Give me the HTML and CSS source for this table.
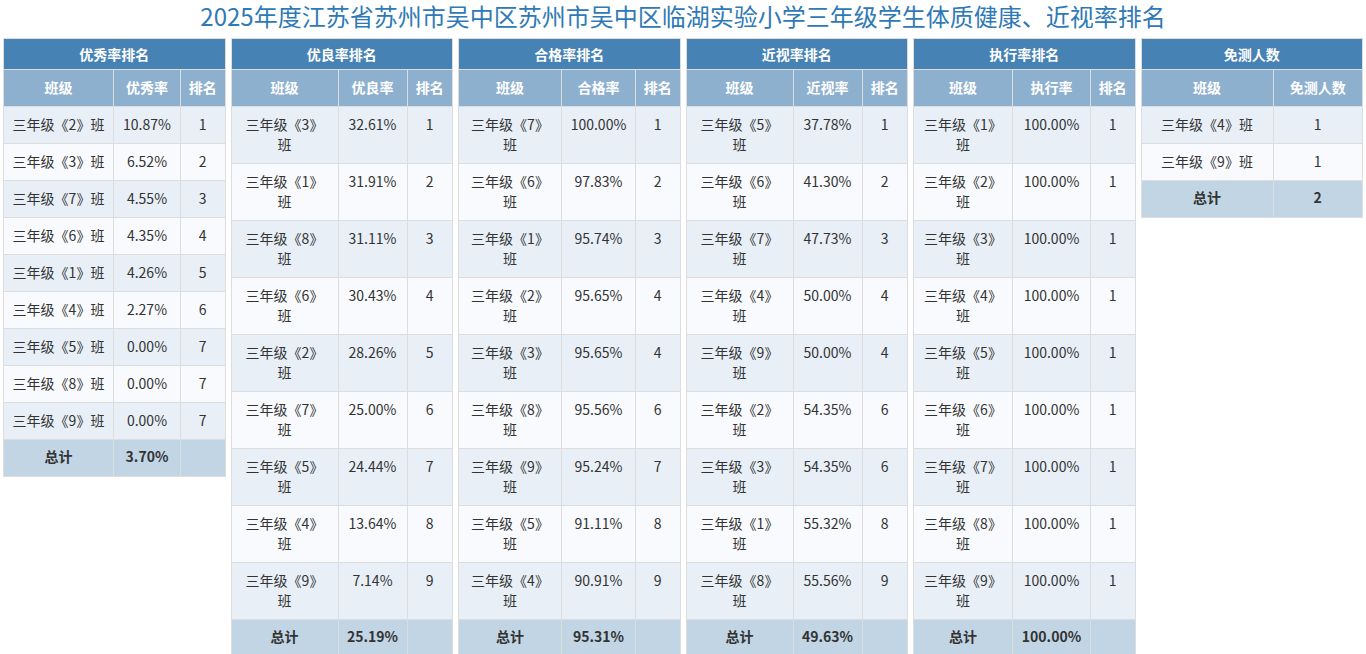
FILE: index.html
```html
<!DOCTYPE html>
<html lang="zh-CN">
<head>
<meta charset="utf-8">
<title>体质健康、近视率排名</title>
<link rel="stylesheet" href="styles.css">
</head>
<body>
<h1 class="title">2025年度江苏省苏州市吴中区苏州市吴中区临湖实验小学三年级学生体质健康、近视率排名</h1>
<div class="boards">
  <table class="rank t1">
    <colgroup><col class="c1"><col class="c2"><col></colgroup>
    <thead>
      <tr><th class="cap" colspan="3">优秀率排名</th></tr>
      <tr class="sub"><th>班级</th><th>优秀率</th><th>排名</th></tr>
    </thead>
    <tbody>
      <tr><td>三年级《2》班</td><td>10.87%</td><td>1</td></tr>
      <tr><td>三年级《3》班</td><td>6.52%</td><td>2</td></tr>
      <tr><td>三年级《7》班</td><td>4.55%</td><td>3</td></tr>
      <tr><td>三年级《6》班</td><td>4.35%</td><td>4</td></tr>
      <tr><td>三年级《1》班</td><td>4.26%</td><td>5</td></tr>
      <tr><td>三年级《4》班</td><td>2.27%</td><td>6</td></tr>
      <tr><td>三年级《5》班</td><td>0.00%</td><td>7</td></tr>
      <tr><td>三年级《8》班</td><td>0.00%</td><td>7</td></tr>
      <tr><td>三年级《9》班</td><td>0.00%</td><td>7</td></tr>
      <tr class="total"><td>总计</td><td>3.70%</td><td></td></tr>
    </tbody>
  </table>

  <table class="rank t2">
    <colgroup><col class="c1"><col class="c2"><col></colgroup>
    <thead>
      <tr><th class="cap" colspan="3">优良率排名</th></tr>
      <tr class="sub"><th>班级</th><th>优良率</th><th>排名</th></tr>
    </thead>
    <tbody>
      <tr><td>三年级《3》班</td><td>32.61%</td><td>1</td></tr>
      <tr><td>三年级《1》班</td><td>31.91%</td><td>2</td></tr>
      <tr><td>三年级《8》班</td><td>31.11%</td><td>3</td></tr>
      <tr><td>三年级《6》班</td><td>30.43%</td><td>4</td></tr>
      <tr><td>三年级《2》班</td><td>28.26%</td><td>5</td></tr>
      <tr><td>三年级《7》班</td><td>25.00%</td><td>6</td></tr>
      <tr><td>三年级《5》班</td><td>24.44%</td><td>7</td></tr>
      <tr><td>三年级《4》班</td><td>13.64%</td><td>8</td></tr>
      <tr><td>三年级《9》班</td><td>7.14%</td><td>9</td></tr>
      <tr class="total"><td>总计</td><td>25.19%</td><td></td></tr>
    </tbody>
  </table>

  <table class="rank t3">
    <colgroup><col class="c1"><col class="c2"><col></colgroup>
    <thead>
      <tr><th class="cap" colspan="3">合格率排名</th></tr>
      <tr class="sub"><th>班级</th><th>合格率</th><th>排名</th></tr>
    </thead>
    <tbody>
      <tr><td>三年级《7》班</td><td>100.00%</td><td>1</td></tr>
      <tr><td>三年级《6》班</td><td>97.83%</td><td>2</td></tr>
      <tr><td>三年级《1》班</td><td>95.74%</td><td>3</td></tr>
      <tr><td>三年级《2》班</td><td>95.65%</td><td>4</td></tr>
      <tr><td>三年级《3》班</td><td>95.65%</td><td>4</td></tr>
      <tr><td>三年级《8》班</td><td>95.56%</td><td>6</td></tr>
      <tr><td>三年级《9》班</td><td>95.24%</td><td>7</td></tr>
      <tr><td>三年级《5》班</td><td>91.11%</td><td>8</td></tr>
      <tr><td>三年级《4》班</td><td>90.91%</td><td>9</td></tr>
      <tr class="total"><td>总计</td><td>95.31%</td><td></td></tr>
    </tbody>
  </table>

  <table class="rank t4">
    <colgroup><col class="c1"><col class="c2"><col></colgroup>
    <thead>
      <tr><th class="cap" colspan="3">近视率排名</th></tr>
      <tr class="sub"><th>班级</th><th>近视率</th><th>排名</th></tr>
    </thead>
    <tbody>
      <tr><td>三年级《5》班</td><td>37.78%</td><td>1</td></tr>
      <tr><td>三年级《6》班</td><td>41.30%</td><td>2</td></tr>
      <tr><td>三年级《7》班</td><td>47.73%</td><td>3</td></tr>
      <tr><td>三年级《4》班</td><td>50.00%</td><td>4</td></tr>
      <tr><td>三年级《9》班</td><td>50.00%</td><td>4</td></tr>
      <tr><td>三年级《2》班</td><td>54.35%</td><td>6</td></tr>
      <tr><td>三年级《3》班</td><td>54.35%</td><td>6</td></tr>
      <tr><td>三年级《1》班</td><td>55.32%</td><td>8</td></tr>
      <tr><td>三年级《8》班</td><td>55.56%</td><td>9</td></tr>
      <tr class="total"><td>总计</td><td>49.63%</td><td></td></tr>
    </tbody>
  </table>

  <table class="rank t5">
    <colgroup><col class="c1"><col class="c2"><col></colgroup>
    <thead>
      <tr><th class="cap" colspan="3">执行率排名</th></tr>
      <tr class="sub"><th>班级</th><th>执行率</th><th>排名</th></tr>
    </thead>
    <tbody>
      <tr><td>三年级《1》班</td><td>100.00%</td><td>1</td></tr>
      <tr><td>三年级《2》班</td><td>100.00%</td><td>1</td></tr>
      <tr><td>三年级《3》班</td><td>100.00%</td><td>1</td></tr>
      <tr><td>三年级《4》班</td><td>100.00%</td><td>1</td></tr>
      <tr><td>三年级《5》班</td><td>100.00%</td><td>1</td></tr>
      <tr><td>三年级《6》班</td><td>100.00%</td><td>1</td></tr>
      <tr><td>三年级《7》班</td><td>100.00%</td><td>1</td></tr>
      <tr><td>三年级《8》班</td><td>100.00%</td><td>1</td></tr>
      <tr><td>三年级《9》班</td><td>100.00%</td><td>1</td></tr>
      <tr class="total"><td>总计</td><td>100.00%</td><td></td></tr>
    </tbody>
  </table>

  <table class="rank t6">
    <colgroup><col class="c1"><col></colgroup>
    <thead>
      <tr><th class="cap" colspan="2">免测人数</th></tr>
      <tr class="sub"><th>班级</th><th>免测人数</th></tr>
    </thead>
    <tbody>
      <tr><td>三年级《4》班</td><td>1</td></tr>
      <tr><td>三年级《9》班</td><td>1</td></tr>
      <tr class="total"><td>总计</td><td>2</td></tr>
    </tbody>
  </table>
</div>
</body>
</html>
```

FILE: styles.css
```css
html, body {
  margin: 0;
  padding: 0;
  background: #ffffff;
}

body {
  font-family: "Microsoft YaHei", "Noto Sans CJK SC", "Noto Sans", sans-serif;
  font-size: 14px;
  line-height: 20px;
  color: #333333;
}

.title {
  margin: 0 0 7px;
  padding: 0;
  line-height: 31px;
  font-size: 24px;
  font-weight: normal;
  text-align: center;
  color: #2f7ab6;
  white-space: nowrap;
}

.boards {
  display: grid;
  grid-template-columns: repeat(6, 1fr);
  column-gap: 5px;
  padding: 0 3px;
  align-items: start;
}

.rank {
  width: 100%;
  border-collapse: collapse;
  table-layout: fixed;
  border: 1px solid #dddddd;
}

.rank th,
.rank td {
  border: 1px solid #dddddd;
  padding: 8px;
  line-height: 20px;
  text-align: center;
  vertical-align: top;
}

.rank td {
  padding-top: 7px;
  padding-bottom: 9px;
}

.rank th {
  font-weight: bold;
  color: #ffffff;
  vertical-align: middle;
}

.rank th.cap {
  padding: 5px 8px;
  background: #4682b4;
}

.rank .sub th {
  background: #8eb0cf;
  padding: 7px 4px 9px;
}

.rank tbody tr:nth-child(odd) td {
  background: #e8eff7;
}

.rank tbody tr:nth-child(even) td {
  background: #f8fafd;
}

.rank tbody tr.total td {
  background: #c2d5e5;
  font-weight: bold;
  padding-top: 6px;
  padding-bottom: 10px;
}

.t1 .c1 { width: 110px; }
.t1 .c2 { width: 67px; }
.t2 .c1 { width: 107px; }
.t2 .c2 { width: 69px; }
.t3 .c1 { width: 103px; }
.t3 .c2 { width: 74px; }
.t4 .c1 { width: 107px; }
.t4 .c2 { width: 69px; }
.t5 .c1 { width: 99px; }
.t5 .c2 { width: 78px; }
.t6 .c1 { width: 132px; }
```
